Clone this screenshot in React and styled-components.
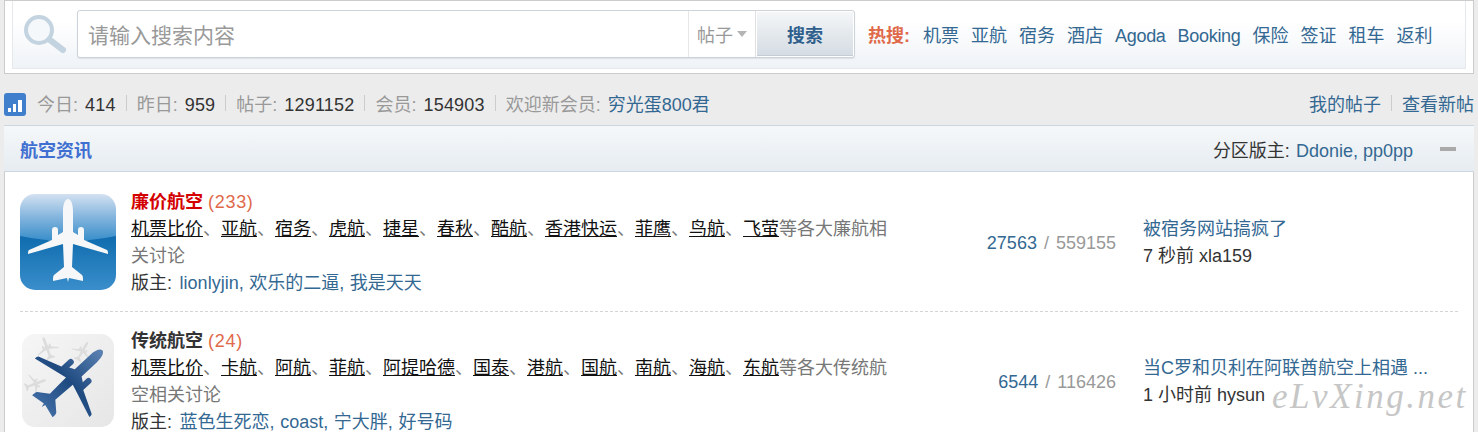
import React from 'react';
import styled, { createGlobalStyle } from 'styled-components';

const GlobalStyle = createGlobalStyle`
  html, body {
    margin: 0;
    height: 100%;
    overflow: hidden;
    background: #ececec;
  }
  body {
    font-family: "Liberation Sans", "Noto Sans CJK SC", sans-serif;
    font-size: 18px;
    color: #333;
  }
`;

const Page = styled.div`
  position: relative;
  height: 432px;
  overflow: hidden;
`;

const TopCard = styled.div`
  height: 74px;
  box-sizing: border-box;
  margin: 0 4px;
  padding: 0 7px 5px;
  background: #fff;
  border: 1px solid #ccc;
`;

const SearchPanel = styled.div`
  height: 68px;
  box-sizing: border-box;
  display: flex;
  align-items: center;
  padding: 0 0 1px 10px;
  background: linear-gradient(#fff 30%, #eff3f7);
  border: 1px solid #e6e9ec;
  border-top: none;
`;

const SearchIcon = styled.svg`
  width: 44px;
  height: 40px;
  margin-right: 10px;
  flex: none;
`;

const SearchBox = styled.div`
  width: 778px;
  height: 48px;
  box-sizing: border-box;
  display: flex;
  background: #fff;
  border: 1px solid #ccd3d9;
  border-radius: 3px;
  box-shadow: 0 1px 1px #dde2e6;
`;

const SearchInput = styled.input`
  flex: 1;
  min-width: 0;
  border: none;
  outline: none;
  background: transparent;
  padding: 4px 10px 0;
  font: inherit;
  font-size: 21px;
  color: #333;
  &::placeholder {
    color: #999;
    opacity: 1;
  }
`;

const TypePicker = styled.div`
  width: 66px;
  display: flex;
  align-items: center;
  justify-content: center;
  gap: 4px;
  color: #999;
  border-left: 1px solid #e6e6e6;
  border-right: 1px solid #e0e0e0;
`;

const Caret = styled.span`
  width: 0;
  height: 0;
  border: 5px solid transparent;
  border-top: 6px solid #b4b4b4;
  border-bottom: none;
`;

const SearchButton = styled.button`
  width: 96px;
  margin: 1px;
  border: none;
  border-bottom: 1px solid #c5ccd3;
  background: linear-gradient(#f4f6f8, #d5dce3);
  color: #2f5f8c;
  font: inherit;
  font-weight: bold;
`;

const HotWords = styled.div`
  display: flex;
  align-items: baseline;
  gap: 12px;
  margin-left: 13px;
  color: #336892;
`;

const HotLabel = styled.span`
  font-weight: bold;
  color: #e0694a;
  margin-right: 1px;
`;

const HotWord = styled.span`
  letter-spacing: ${(p) => (p.$latin ? '-0.3px' : '0')};
`;

const StatBar = styled.div`
  height: 51px;
  box-sizing: border-box;
  padding: 6px 4px 0;
  display: flex;
  align-items: center;
  justify-content: space-between;
  color: #999;
`;

const StatGroup = styled.div`
  display: flex;
  align-items: baseline;
`;

const ChartBadge = styled.svg`
  align-self: center;
  width: 22px;
  height: 23px;
  margin: 3px 11px 0 0;
`;

const Num = styled.span`
  margin-left: 7px;
  letter-spacing: 0.2px;
  color: #333;
`;

const Sep = styled.span`
  align-self: center;
  width: 1px;
  height: 16px;
  margin: 0 10px;
  background: #ccc;
`;

const Link = styled.span`
  color: #336892;
`;

const NewMember = styled(Link)`
  margin-left: 7px;
`;

const Section = styled.div`
  margin: 0 4px;
  background: #fff;
  border-right: 1px solid #ccc;
  border-left: 1px solid #ccc;
`;

const SectionHead = styled.div`
  height: 47px;
  box-sizing: border-box;
  display: flex;
  align-items: center;
  justify-content: space-between;
  padding: 1px 18px 0 16px;
  background: linear-gradient(#f5f8fa, #e6ecf1);
  border-top: 1px solid #ccd6de;
  border-bottom: 1px solid #ccd6de;
  margin: 0 -1px;
`;

const SectionTitle = styled.span`
  font-weight: bold;
  color: #3f6fd0;
`;

const SectionTools = styled.div`
  display: flex;
  align-items: center;
  gap: 27px;
`;

const ModLabel = styled.span`
  margin-right: 2px;
`;

const HeadLabel = styled.span`
  margin-right: 1px;
`;

const Collapse = styled.span`
  width: 16px;
  height: 4px;
  background: #aaa;
`;

const ForumList = styled.div`
  padding: 1px 15px 0;
`;

const ForumRow = styled.div`
  display: flex;
  align-items: center;
  padding: 16px 0 14px;
  border-bottom: ${(p) => (p.$last ? 'none' : '1px dashed #d4d4d4')};
  line-height: 27px;
`;

const ForumIcon = styled.svg`
  width: 96px;
  height: 96px;
  flex: none;
  margin: -2px 15px 0 0;
`;

const ForumInfo = styled.div`
  width: 757px;
  flex: none;
  color: #777;
`;

const ForumName = styled.div`
  font-weight: bold;
  color: ${(p) => p.$color};
`;

const Today = styled.span`
  font-weight: normal;
  letter-spacing: 0.7px;
  color: #e0694a;
`;

const Tag = styled.u`
  color: #111;
`;

const Mods = styled.div`
  word-spacing: 0.6px;
  color: #333;
`;

const Counts = styled.div`
  width: 228px;
  flex: none;
  text-align: right;
  word-spacing: 2px;
  color: #999;
`;

const Latest = styled.div`
  margin-left: 27px;
  white-space: nowrap;
  color: #333;
`;

const Watermark = styled.div`
  position: absolute;
  left: 1272px;
  top: 377px;
  font-family: "Liberation Serif", serif;
  font-style: italic;
  font-size: 35px;
  letter-spacing: 2.5px;
  color: #c6c6c6;
  pointer-events: none;
`;

const hotWords = ['机票', '亚航', '宿务', '酒店', 'Agoda', 'Booking', '保险', '签证', '租车', '返利'];

const forums = [
  {
    name: '廉价航空',
    color: '#d40000',
    today: 233,
    tags: ['机票比价', '亚航', '宿务', '虎航', '捷星', '春秋', '酷航', '香港快运', '菲鹰', '鸟航', '飞萤'],
    tail: '等各大廉航相关讨论',
    mods: 'lionlyjin, 欢乐的二逼, 我是天天',
    threads: 27563,
    posts: 559155,
    latest: '被宿务网站搞疯了',
    when: '7 秒前 xla159',
    Icon: BluePlane,
  },
  {
    name: '传统航空',
    color: '#333',
    today: 24,
    tags: ['机票比价', '卡航', '阿航', '菲航', '阿提哈德', '国泰', '港航', '国航', '南航', '海航', '东航'],
    tail: '等各大传统航空相关讨论',
    mods: '蓝色生死恋, coast, 宁大胖, 好号码',
    threads: 6544,
    posts: 116426,
    latest: '当C罗和贝利在阿联酋航空上相遇 ...',
    when: '1 小时前 hysun',
    Icon: GreyPlane,
  },
];

const planePath =
  'M48 5c-3 0-5 5-5 12v21l-5 3v-5c0-2-1-3-3-3s-3 1-3 3v10L9 56c-1 1-1 2-1 4l35-10 1 23-10 8c-1 1-1 3-1 6l14-3 1 4 1-4 14 3c0-3 0-5-1-6l-10-8 1-23 35 10c0-2 0-3-1-4L64 46V36c0-2-1-3-3-3s-3 1-3 3v5l-5-3V17c0-7-2-12-5-12z';

function BluePlane() {
  return (
    <ForumIcon viewBox="0 0 96 96">
      <defs>
        <linearGradient id="skyTop" x1="0" y1="0" x2="0" y2="1">
          <stop offset="0" stopColor="#d3e1f1" />
          <stop offset="0.5" stopColor="#84b5de" />
          <stop offset="1" stopColor="#3b8fca" />
        </linearGradient>
        <linearGradient id="skyBottom" x1="0" y1="0" x2="0" y2="1">
          <stop offset="0" stopColor="#0f6cae" />
          <stop offset="1" stopColor="#3a8ecb" />
        </linearGradient>
        <clipPath id="tile">
          <rect width="96" height="96" rx="15" />
        </clipPath>
      </defs>
      <g clipPath="url(#tile)">
        <rect width="96" height="46" fill="url(#skyTop)" />
        <path d="M0 42q48 10 96 0v54H0z" fill="url(#skyBottom)" />
      </g>
      <path d={planePath} fill="#f6f7f8" />
    </ForumIcon>
  );
}

function GreyPlane() {
  return (
    <ForumIcon viewBox="0 0 96 96">
      <defs>
        <linearGradient id="mapBg" x1="0" y1="0" x2="1" y2="1">
          <stop offset="0" stopColor="#f6f6f6" />
          <stop offset="1" stopColor="#e6e6e6" />
        </linearGradient>
        <linearGradient id="jet" x1="0" y1="0" x2="0" y2="1">
          <stop offset="0" stopColor="#5d83b3" />
          <stop offset="0.55" stopColor="#1e4a80" />
          <stop offset="1" stopColor="#3f6ba3" />
        </linearGradient>
      </defs>
      <rect x="2" y="1" width="92" height="93" rx="13" fill="url(#mapBg)" />
      <g fill="#dcdcdc">
        <path d={planePath} transform="translate(14 2) rotate(-20 14 14) scale(.28)" />
        <path d={planePath} transform="translate(50 6) rotate(30 12 12) scale(.26)" />
        <path d={planePath} transform="translate(2 38) rotate(70 13 13) scale(.27)" />
      </g>
      <path d={planePath} transform="rotate(47 48 48) translate(1 -3)" fill="url(#jet)" />
    </ForumIcon>
  );
}

export default function App() {
  return (
    <Page>
      <GlobalStyle />
      <TopCard>
        <SearchPanel>
          <SearchIcon viewBox="0 0 44 40">
            <circle cx="16" cy="16" r="13" fill="#f4f8fb" stroke="#c3d3df" strokeWidth="4" />
            <path d="M27 26l13 10" stroke="#c3d3df" strokeWidth="6" strokeLinecap="round" />
          </SearchIcon>
          <SearchBox>
            <SearchInput placeholder="请输入搜索内容" />
            <TypePicker>
              帖子
              <Caret />
            </TypePicker>
            <SearchButton>搜索</SearchButton>
          </SearchBox>
          <HotWords>
            <HotLabel>热搜:</HotLabel>
            {hotWords.map((w) => (
              <HotWord key={w} $latin={/^[A-Za-z]+$/.test(w)}>
                {w}
              </HotWord>
            ))}
          </HotWords>
        </SearchPanel>
      </TopCard>

      <StatBar>
        <StatGroup>
          <ChartBadge viewBox="0 0 22 23">
            <rect width="22" height="23" rx="3" fill="#3f7fcb" />
            <g fill="#fff">
              <rect x="4" y="15" width="3" height="4" />
              <rect x="9" y="11" width="3" height="8" />
              <rect x="14" y="7" width="4" height="12" />
            </g>
          </ChartBadge>
          今日:<Num>414</Num>
          <Sep />
          昨日:<Num>959</Num>
          <Sep />
          帖子:<Num>1291152</Num>
          <Sep />
          会员:<Num>154903</Num>
          <Sep />
          欢迎新会员:<NewMember>穷光蛋800君</NewMember>
        </StatGroup>
        <StatGroup>
          <Link>我的帖子</Link>
          <Sep />
          <Link>查看新帖</Link>
        </StatGroup>
      </StatBar>

      <Section>
        <SectionHead>
          <SectionTitle>航空资讯</SectionTitle>
          <SectionTools>
            <span>
              <HeadLabel>分区版主: </HeadLabel>
              <Link>Ddonie, pp0pp</Link>
            </span>
            <Collapse />
          </SectionTools>
        </SectionHead>
        <ForumList>
          {forums.map((f, i) => (
            <ForumRow key={f.name} $last={i === forums.length - 1}>
              <f.Icon />
              <ForumInfo>
                <ForumName $color={f.color}>
                  {f.name} <Today>({f.today})</Today>
                </ForumName>
                <div>
                  {f.tags.map((t, n) => (
                    <React.Fragment key={t}>
                      {n > 0 && '、'}
                      <Tag>{t}</Tag>
                    </React.Fragment>
                  ))}
                  {f.tail}
                </div>
                <Mods>
                  <ModLabel>版主: </ModLabel>
                  <Link>{f.mods}</Link>
                </Mods>
              </ForumInfo>
              <Counts>
                <Link>{f.threads}</Link> / {f.posts}
              </Counts>
              <Latest>
                <Link>{f.latest}</Link>
                <div>{f.when}</div>
              </Latest>
            </ForumRow>
          ))}
        </ForumList>
      </Section>
      <Watermark>eLvXing.net</Watermark>
    </Page>
  );
}
